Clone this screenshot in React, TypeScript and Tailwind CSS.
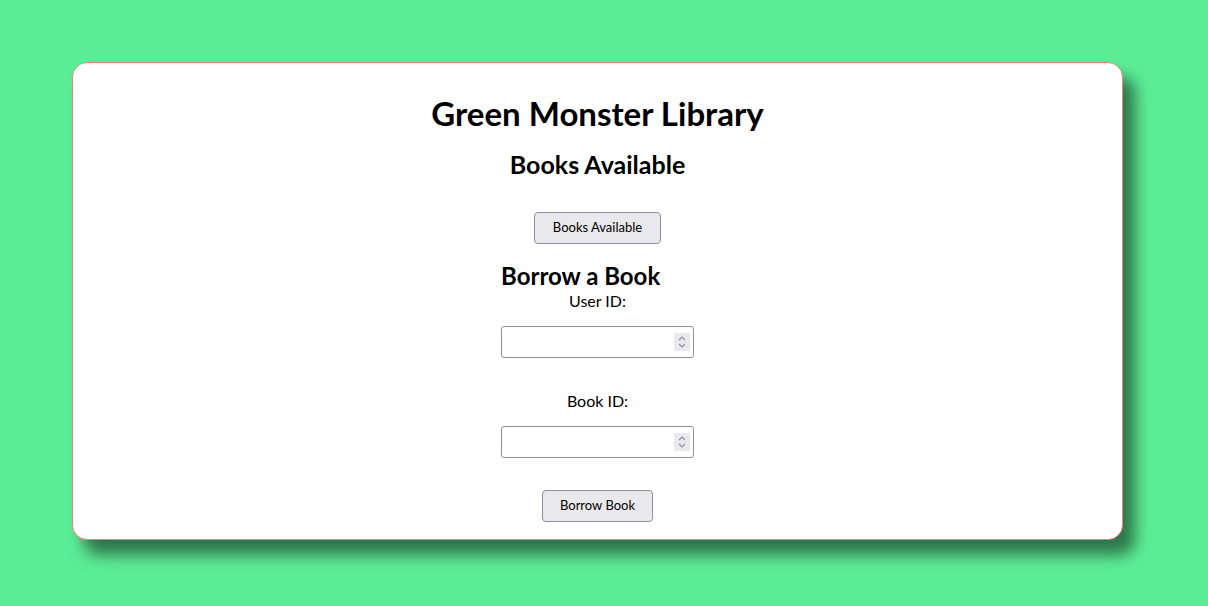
import React, { useState } from 'react';

const Spinner = () => (
  <div className="pointer-events-none absolute right-[4px] top-[7px] flex h-[18px] w-[16px] items-center justify-center bg-[#e9e9ed]">
    <svg width="10" height="14" viewBox="0 0 10 14" fill="none" stroke="#8f8f9d" strokeWidth="1.2">
      <path d="M2 5 L5 2 L8 5" />
      <path d="M2 9 L5 12 L8 9" />
    </svg>
  </div>
);

const NumberField = ({ value, onChange }: { value: string; onChange: (v: string) => void }) => (
  <div className="relative h-[32px] w-[193px]">
    <input
      type="text"
      inputMode="numeric"
      value={value}
      onChange={(e) => onChange(e.target.value)}
      className="h-full w-full rounded-[3px] border border-[#8f8f9d] bg-white px-2 text-[13px] outline-none"
    />
    <Spinner />
  </div>
);

const App = () => {
  const [userId, setUserId] = useState('');
  const [bookId, setBookId] = useState('');

  return (
    <div className="min-h-[606px] bg-[#5bed96] pl-[72px] pr-[85px] pt-[62px] font-['Lato',sans-serif] text-black">
      <div className="flex h-[478px] flex-col items-center rounded-[15px] border border-[#f08080] bg-white shadow-[12px_15px_15px_rgba(0,0,0,0.5)]">
        <h1 className="mt-[30px] text-[33px] font-bold leading-[40px]">Green Monster Library</h1>
        <h2 className="mt-[16px] text-[25px] font-bold leading-[30px]">Books Available</h2>
        <button className="mt-[33px] h-[32px] rounded-[4px] border border-[#8f8f9d] bg-[#e9e9ed] px-[18px] text-[13px]">
          Books Available
        </button>
        <form className="mt-[17px] flex w-[193px] flex-col" onSubmit={(e) => e.preventDefault()}>
          <h2 className="text-[24px] font-bold leading-[30px]">Borrow a Book</h2>
          <label className="text-center text-[16px] leading-[20px]">User ID:</label>
          <div className="mt-[15px]">
            <NumberField value={userId} onChange={setUserId} />
          </div>
          <label className="mt-[33px] text-center text-[16px] leading-[20px]">Book ID:</label>
          <div className="mt-[15px]">
            <NumberField value={bookId} onChange={setBookId} />
          </div>
          <div className="mt-[32px] flex justify-center">
            <button type="submit" className="h-[32px] rounded-[4px] border border-[#8f8f9d] bg-[#e9e9ed] px-[17px] text-[13px]">
              Borrow Book
            </button>
          </div>
        </form>
      </div>
    </div>
  );
};

export default App;
